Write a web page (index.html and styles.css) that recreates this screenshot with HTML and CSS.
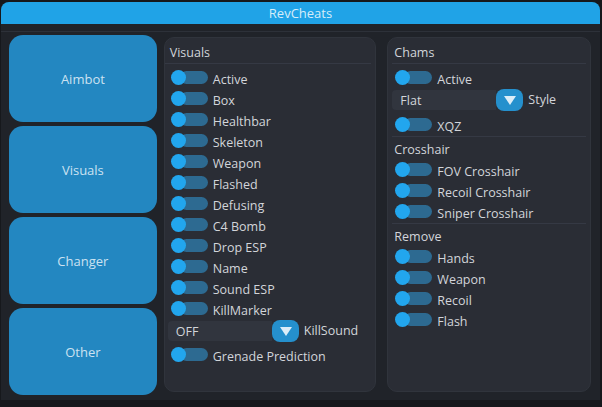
FILE: index.html
```html
<!DOCTYPE html>
<html lang="en">
<head>
  <meta charset="UTF-8">
  <title>RevCheats</title>
  <link rel="stylesheet" href="styles.css">
</head>
<body>
  <div class="window">
    <div class="titlebar">RevCheats</div>
    <div class="divider"></div>

    <div class="content">
      <!-- tabs -->
      <div class="sidebar">
        <div class="tab">Aimbot</div>
        <div class="tab">Visuals</div>
        <div class="tab">Changer</div>
        <div class="tab">Other</div>
      </div>

      <!-- visuals -->
      <div class="panel panel-left">
        <div class="group">
          <div class="group-title first">Visuals</div>
          <div class="rows">
            <div class="row"><span class="toggle"></span><span class="label">Active</span></div>
            <div class="row"><span class="toggle"></span><span class="label">Box</span></div>
            <div class="row"><span class="toggle"></span><span class="label">Healthbar</span></div>
            <div class="row"><span class="toggle"></span><span class="label">Skeleton</span></div>
            <div class="row"><span class="toggle"></span><span class="label">Weapon</span></div>
            <div class="row"><span class="toggle"></span><span class="label">Flashed</span></div>
            <div class="row"><span class="toggle"></span><span class="label">Defusing</span></div>
            <div class="row"><span class="toggle"></span><span class="label">C4 Bomb</span></div>
            <div class="row"><span class="toggle"></span><span class="label">Drop ESP</span></div>
            <div class="row"><span class="toggle"></span><span class="label">Name</span></div>
            <div class="row"><span class="toggle"></span><span class="label">Sound ESP</span></div>
            <div class="row"><span class="toggle"></span><span class="label">KillMarker</span></div>
            <div class="combo-row">
              <div class="combo">OFF</div>
              <div class="combo-btn"></div>
              <span class="combo-label">KillSound</span>
            </div>
            <div class="row gap-top"><span class="toggle"></span><span class="label">Grenade Prediction</span></div>
          </div>
        </div>
      </div>

      <!-- chams / crosshair / remove -->
      <div class="panel panel-right">
        <div class="group">
          <div class="group-title first">Chams</div>
          <div class="rows">
            <div class="row"><span class="toggle"></span><span class="label">Active</span></div>
            <div class="combo-row">
              <div class="combo">Flat</div>
              <div class="combo-btn"></div>
              <span class="combo-label">Style</span>
            </div>
            <div class="row xqz"><span class="toggle"></span><span class="label">XQZ</span></div>
          </div>
        </div>
        <div class="group">
          <div class="group-title">Crosshair</div>
          <div class="row"><span class="toggle"></span><span class="label">FOV Crosshair</span></div>
          <div class="row"><span class="toggle"></span><span class="label">Recoil Crosshair</span></div>
          <div class="row"><span class="toggle"></span><span class="label">Sniper Crosshair</span></div>
        </div>
        <div class="group">
          <div class="group-title">Remove</div>
          <div class="row"><span class="toggle"></span><span class="label">Hands</span></div>
          <div class="row"><span class="toggle"></span><span class="label">Weapon</span></div>
          <div class="row"><span class="toggle"></span><span class="label">Recoil</span></div>
          <div class="row"><span class="toggle"></span><span class="label">Flash</span></div>
        </div>
      </div>
    </div>
  </div>
</body>
</html>
```

FILE: styles.css
```css
body {
  margin: 0;
  background: #16181c;
  font-family: "Open Sans", "Noto Sans", sans-serif;
  font-size: 12.5px;
  color: #d2d5da;
}
.window {
  margin: 2px 2px 0 1px;
  height: 398px;
  background: #202329;
  border-radius: 8px 8px 0 0;
  overflow: hidden;
}
.titlebar {
  height: 22px;
  line-height: 23px;
  background: #20a3e7;
  color: #d6edf9;
  text-align: center;
  font-size: 13px;
}
.divider {
  margin-top: 7px;
  height: 1px;
  background: #2d3139;
}
.content {
  display: flex;
  padding: 0 9px 0 8px;
}
.sidebar {
  width: 148px;
  margin-top: 3px;
  display: flex;
  flex-direction: column;
  gap: 4px;
}
.tab {
  height: 87px;
  background: #2387c1;
  border-radius: 14px;
  color: #cce2f1;
  font-size: 13px;
  display: flex;
  align-items: center;
  justify-content: center;
}
.panel {
  margin-top: 5px;
  height: 353px;
  background: #2a2d35;
  border: 1px solid #30343c;
  border-radius: 10px;
}
.panel-left {
  width: 211px;
  margin-left: 7px;
}
.panel-right {
  width: 202px;
  margin-left: 11px;
}
.group + .group {
  border-top: 1px solid #353944;
  margin: 0 4px;
}
.group + .group .row,
.group + .group .group-title {
  margin-left: -4px;
  margin-right: -4px;
}
.group-title {
  height: 23px;
  line-height: 26px;
  padding-left: 6px;
}
.group-title.first {
  height: 25px;
  line-height: 29px;
  padding-left: 5px;
  border-bottom: 1px solid #353944;
  margin: 0 4px;
}
.panel-left .group-title.first {
  margin-left: 0;
}
.panel-right .group-title.first {
  padding-left: 2px;
}
.rows {
  padding-top: 4px;
}
.row {
  height: 21px;
  display: flex;
  align-items: flex-start;
  padding-left: 6px;
}
.panel-right .row {
  padding-left: 7px;
}
.label {
  line-height: 24px;
}
.toggle {
  position: relative;
  width: 28px;
  height: 13px;
  margin: 3px 5px 0 9px;
  background: #2d6a91;
  border-radius: 7px;
  flex-shrink: 0;
}
.toggle::before {
  content: "";
  position: absolute;
  left: -9px;
  top: -1px;
  width: 15px;
  height: 15px;
  border-radius: 50%;
  background: #22a6ee;
}
.combo-row {
  height: 22px;
  display: flex;
  align-items: center;
  padding-left: 3px;
}
.panel-right .combo-row {
  padding-left: 4px;
}
.combo {
  width: 96px;
  height: 20px;
  line-height: 22px;
  padding-left: 8px;
  background: #31353e;
  border-radius: 4px 0 0 4px;
}
.combo-btn {
  position: relative;
  width: 27px;
  height: 22px;
  background: #2590cd;
  border-radius: 8px;
}
.combo-btn::after {
  content: "";
  position: absolute;
  left: 8px;
  top: 7px;
  border-left: 6px solid transparent;
  border-right: 6px solid transparent;
  border-top: 9px solid #dcedf8;
}
.combo-label {
  margin-left: 5px;
  line-height: 24px;
}
.gap-top {
  margin-top: 3px;
}
.xqz {
  margin-top: 4px;
}
```
